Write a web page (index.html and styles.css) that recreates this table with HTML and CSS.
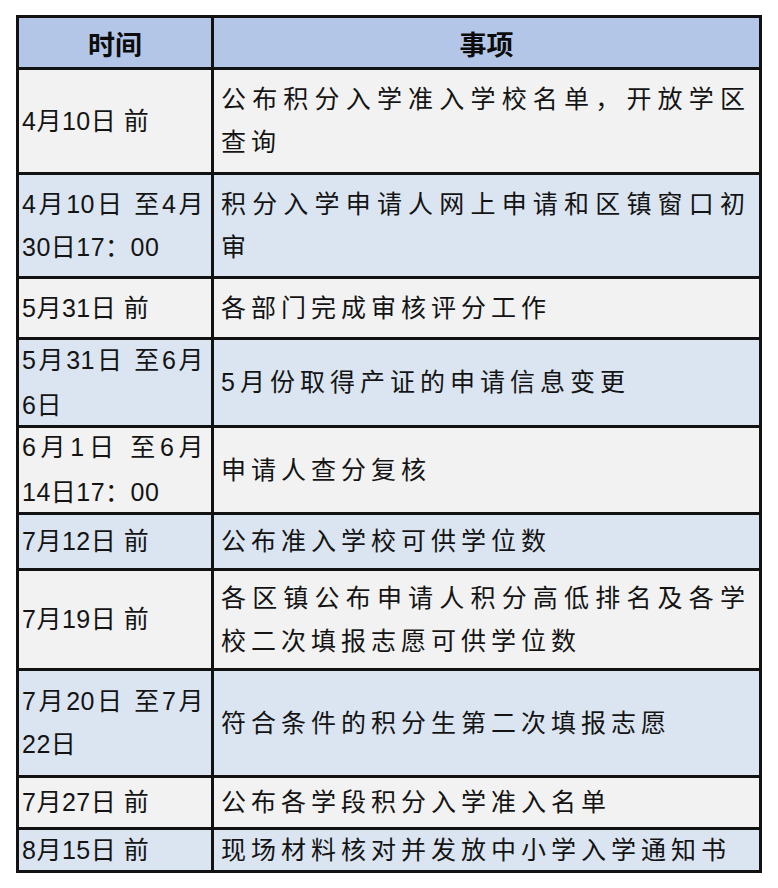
FILE: index.html
```html
<!DOCTYPE html>
<html lang="zh-CN">
<head>
<meta charset="utf-8">
<title>积分入学时间安排</title>
<link rel="stylesheet" href="styles.css">
</head>
<body>
<div class="sheet">
  <div class="cell hd">时间</div>
  <div class="cell hd">事项</div>

  <div class="cell lt when"><div>4月10日 前</div></div>
  <div class="cell lt what"><div class="spread">公布积分入学准入学校名单，开放学区</div><div>查询</div></div>

  <div class="cell bl when"><div class="spread">4月10日 至4月</div><div>30日17：00</div></div>
  <div class="cell bl what"><div class="spread">积分入学申请人网上申请和区镇窗口初</div><div>审</div></div>

  <div class="cell lt when"><div>5月31日 前</div></div>
  <div class="cell lt what"><div>各部门完成审核评分工作</div></div>

  <div class="cell bl when wide"><div class="spread">5月31日 至6月</div><div>6日</div></div>
  <div class="cell bl what"><div>5月份取得产证的申请信息变更</div></div>

  <div class="cell lt when wide"><div class="spread">6月1日 至6月</div><div>14日17：00</div></div>
  <div class="cell lt what"><div>申请人查分复核</div></div>

  <div class="cell bl when"><div>7月12日 前</div></div>
  <div class="cell bl what"><div>公布准入学校可供学位数</div></div>

  <div class="cell lt when"><div>7月19日 前</div></div>
  <div class="cell lt what"><div class="spread">各区镇公布申请人积分高低排名及各学</div><div>校二次填报志愿可供学位数</div></div>

  <div class="cell bl when"><div class="spread">7月20日 至7月</div><div>22日</div></div>
  <div class="cell bl what"><div>符合条件的积分生第二次填报志愿</div></div>

  <div class="cell lt when"><div>7月27日 前</div></div>
  <div class="cell lt what"><div>公布各学段积分入学准入名单</div></div>

  <div class="cell bl when"><div>8月15日 前</div></div>
  <div class="cell bl what"><div>现场材料核对并发放中小学入学通知书</div></div>
</div>
</body>
</html>
```

FILE: styles.css
```css
html, body {
  margin: 0;
  padding: 0;
  background: #ffffff;
}

body {
  font-family: "Liberation Sans", "Noto Sans CJK SC", sans-serif;
  color: #141414;
}

.sheet {
  margin: 15px 0 0 16px;
  width: 746px;
  box-sizing: border-box;
  display: grid;
  grid-template-columns: 192px 545px;
  grid-template-rows: 49px 102px 101px 58px 85px 84px 53px 97px 104px 49px 40px;
  gap: 3px;
  padding: 3px;
  background: #121212;
}

.cell {
  display: flex;
  flex-direction: column;
  justify-content: center;
  box-sizing: border-box;
  font-size: 25px;
  line-height: 43px;
  white-space: nowrap;
}

.hd {
  background: #b4c6e7;
  align-items: center;
  font-family: "Noto Sans CJK SC", sans-serif;
  font-weight: 700;
  font-size: 27px;
  color: #0c0c0c;
  padding-top: 1px;
}

.lt {
  background: #f2f2f2;
}

.bl {
  background: #dbe5f1;
}

.when {
  padding: 0 7px 0 3px;
  letter-spacing: 0.5px;
}

.when.wide {
  line-height: 45px;
}

.what {
  padding: 0 9px 0 7px;
  letter-spacing: 5px;
}

.spread {
  text-align: justify;
  text-align-last: justify;
}
```
